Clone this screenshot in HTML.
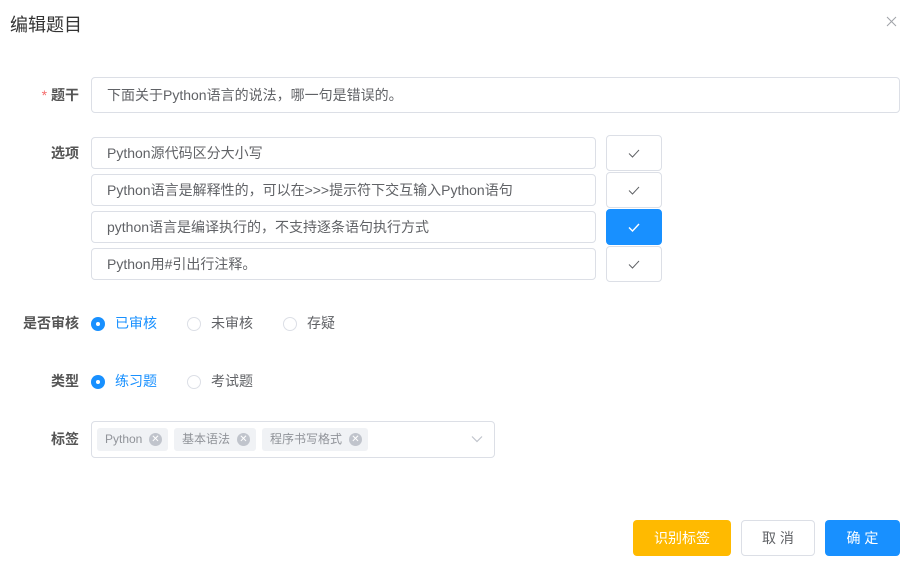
<!DOCTYPE html>
<html><head><meta charset="utf-8"><style>
*{margin:0;padding:0;box-sizing:border-box}
body{width:913px;height:570px;background:#fff;position:relative;overflow:hidden;font-family:"Liberation Sans","Noto Sans CJK SC",sans-serif;color:#606266;font-size:14px}
.a{position:absolute}
.lbl{position:absolute;right:834px;font-weight:bold;color:#555;font-size:14px;line-height:20px}
.inp{position:absolute;border:1px solid #dcdfe6;border-radius:4px;padding-left:15px;color:#606266;font-size:14px;display:flex;align-items:center;background:#fff;padding-bottom:1px}
.cb{position:absolute;left:606px;width:56px;height:36px;border:1px solid #dcdfe6;border-radius:4px;background:#fff;display:flex;align-items:center;justify-content:center}
.r{position:absolute;width:14px;height:14px;border-radius:50%;border:1px solid #dcdfe6;background:#fff}
.r.on{border:none;background:#1890ff}
.r.on:after{content:"";position:absolute;left:5px;top:5px;width:4px;height:4px;border-radius:50%;background:#fff}
.rt{position:absolute;font-size:14px;line-height:18px;color:#606266}
.tag{position:absolute;top:428px;height:23px;background:#f0f2f5;border-radius:3px;color:#909399;font-size:12px;line-height:23px;padding-left:8px}
.x{position:absolute;top:5px;width:13px;height:13px;border-radius:50%;background:#c0c4cc;color:#fff;font-size:10px;line-height:13px;text-align:center}
.btn{position:absolute;top:520px;height:36px;border-radius:4px;font-size:14px;display:flex;align-items:center;justify-content:center}
</style></head><body>
<div class="a" style="left:10px;top:13px;font-size:18px;color:#333;line-height:24px">编辑题目</div>
<svg class="a" style="left:886px;top:16px" width="11" height="11"><path d="M1 1L10 10M10 1L1 10" stroke="#a0a3a8" stroke-width="1"/></svg>

<div class="lbl" style="top:85px"><span style="color:#f56c6c;font-weight:normal">*</span> 题干</div>
<div class="inp" style="left:91px;top:77px;width:809px;height:36px">下面关于Python语言的说法，哪一句是错误的。</div>

<div class="lbl" style="top:143px">选项</div>
<div class="inp" style="left:91px;top:137px;width:505px;height:32px">Python源代码区分大小写</div>
<div class="inp" style="left:91px;top:174px;width:505px;height:32px">Python语言是解释性的，可以在&gt;&gt;&gt;提示符下交互输入Python语句</div>
<div class="inp" style="left:91px;top:211px;width:505px;height:32px">python语言是编译执行的，不支持逐条语句执行方式</div>
<div class="inp" style="left:91px;top:248px;width:505px;height:32px">Python用#引出行注释。</div>
<div class="cb" style="top:135px"><svg width="12" height="9"><path d="M1 4.5L4.5 8L11 1" fill="none" stroke="#606266" stroke-width="1"/></svg></div>
<div class="cb" style="top:172px"><svg width="12" height="9"><path d="M1 4.5L4.5 8L11 1" fill="none" stroke="#606266" stroke-width="1"/></svg></div>
<div class="cb" style="top:209px;background:#1890ff;border-color:#1890ff"><svg width="12" height="9"><path d="M1 4.5L4.5 8L11 1" fill="none" stroke="#fff" stroke-width="1.4"/></svg></div>
<div class="cb" style="top:246px"><svg width="12" height="9"><path d="M1 4.5L4.5 8L11 1" fill="none" stroke="#606266" stroke-width="1"/></svg></div>

<div class="lbl" style="top:313px">是否审核</div>
<div class="r on" style="left:91px;top:317px"></div><div class="rt" style="left:115px;top:314px;color:#1890ff">已审核</div>
<div class="r" style="left:187px;top:317px"></div><div class="rt" style="left:211px;top:314px">未审核</div>
<div class="r" style="left:283px;top:317px"></div><div class="rt" style="left:307px;top:314px">存疑</div>

<div class="lbl" style="top:371px">类型</div>
<div class="r on" style="left:91px;top:375px"></div><div class="rt" style="left:115px;top:372px;color:#1890ff">练习题</div>
<div class="r" style="left:187px;top:375px"></div><div class="rt" style="left:211px;top:372px">考试题</div>

<div class="lbl" style="top:429px">标签</div>
<div class="inp" style="left:91px;top:421px;width:404px;height:37px"></div>
<div class="tag" style="left:97px;width:71px">Python<span class="x" style="left:52px">✕</span></div>
<div class="tag" style="left:174px;width:82px">基本语法<span class="x" style="left:63px">✕</span></div>
<div class="tag" style="left:262px;width:106px">程序书写格式<span class="x" style="left:87px">✕</span></div>
<svg class="a" style="left:471px;top:435px" width="12" height="8"><path d="M1 1.5L6 6.5L11 1.5" fill="none" stroke="#c0c4cc" stroke-width="1.2"/></svg>

<div class="btn" style="left:633px;width:98px;background:#ffba00;color:#fff">识别标签</div>
<div class="btn" style="left:741px;width:74px;border:1px solid #dcdfe6;color:#606266">取 消</div>
<div class="btn" style="left:825px;width:75px;background:#1890ff;color:#fff">确 定</div>
</body></html>
